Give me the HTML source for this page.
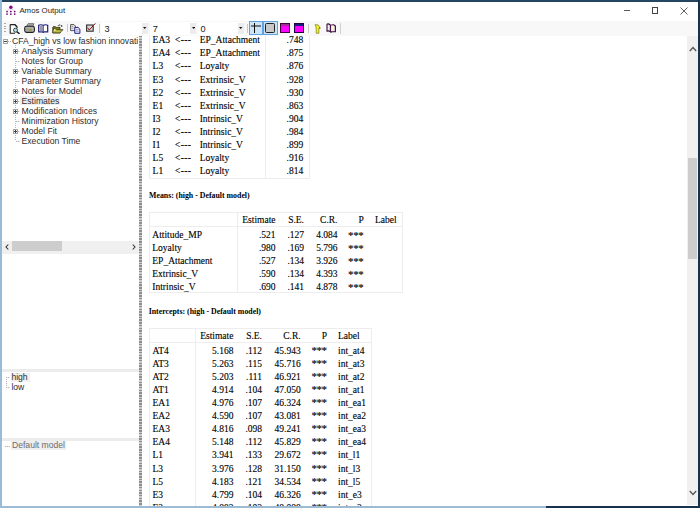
<!DOCTYPE html>
<html><head><meta charset="utf-8"><style>
html,body{margin:0;padding:0;width:700px;height:508px;overflow:hidden;background:#fff}
.r{position:absolute}
.t{position:absolute;white-space:nowrap;}
.s{-webkit-text-stroke:0.12px currentColor}
#left{position:absolute;left:0;top:0;width:139px;height:508px;overflow:hidden}
</style></head><body>
<div class="r" style="left:0px;top:0px;width:700px;height:508px;background:#fff"></div>
<div class="r" style="left:149px;top:30px;width:161px;height:149px;border:1px solid #ededed;border-top:none;box-sizing:border-box"></div>
<div class="r" style="left:265px;top:30px;width:1px;height:148px;background:#ededed"></div>
<div class="t s" style="left:152.60px;top:34.83px;height:10.52px;line-height:10.52px;font-family:'Liberation Serif', serif;font-size:9.5px;color:#000;">EA3</div>
<div class="t s" style="left:175.00px;top:34.83px;height:10.52px;line-height:10.52px;font-family:'Liberation Serif', serif;font-size:9.5px;color:#000;letter-spacing:0.35px">&lt;---</div>
<div class="t s" style="left:199.70px;top:34.83px;height:10.52px;line-height:10.52px;font-family:'Liberation Serif', serif;font-size:9.5px;color:#000;">EP_Attachment</div>
<div class="t s" style="left:3.20px;width:300px;text-align:right;top:34.83px;height:10.52px;line-height:10.52px;font-family:'Liberation Serif', serif;font-size:9.5px;color:#000;">.748</div>
<div class="t s" style="left:152.60px;top:47.83px;height:10.52px;line-height:10.52px;font-family:'Liberation Serif', serif;font-size:9.5px;color:#000;">EA4</div>
<div class="t s" style="left:175.00px;top:47.83px;height:10.52px;line-height:10.52px;font-family:'Liberation Serif', serif;font-size:9.5px;color:#000;letter-spacing:0.35px">&lt;---</div>
<div class="t s" style="left:199.70px;top:47.83px;height:10.52px;line-height:10.52px;font-family:'Liberation Serif', serif;font-size:9.5px;color:#000;">EP_Attachment</div>
<div class="t s" style="left:3.20px;width:300px;text-align:right;top:47.83px;height:10.52px;line-height:10.52px;font-family:'Liberation Serif', serif;font-size:9.5px;color:#000;">.875</div>
<div class="t s" style="left:152.60px;top:60.83px;height:10.52px;line-height:10.52px;font-family:'Liberation Serif', serif;font-size:9.5px;color:#000;">L3</div>
<div class="t s" style="left:175.00px;top:60.83px;height:10.52px;line-height:10.52px;font-family:'Liberation Serif', serif;font-size:9.5px;color:#000;letter-spacing:0.35px">&lt;---</div>
<div class="t s" style="left:199.70px;top:60.83px;height:10.52px;line-height:10.52px;font-family:'Liberation Serif', serif;font-size:9.5px;color:#000;">Loyalty</div>
<div class="t s" style="left:3.20px;width:300px;text-align:right;top:60.83px;height:10.52px;line-height:10.52px;font-family:'Liberation Serif', serif;font-size:9.5px;color:#000;">.876</div>
<div class="t s" style="left:152.60px;top:74.83px;height:10.52px;line-height:10.52px;font-family:'Liberation Serif', serif;font-size:9.5px;color:#000;">E3</div>
<div class="t s" style="left:175.00px;top:74.83px;height:10.52px;line-height:10.52px;font-family:'Liberation Serif', serif;font-size:9.5px;color:#000;letter-spacing:0.35px">&lt;---</div>
<div class="t s" style="left:199.70px;top:74.83px;height:10.52px;line-height:10.52px;font-family:'Liberation Serif', serif;font-size:9.5px;color:#000;">Extrinsic_V</div>
<div class="t s" style="left:3.20px;width:300px;text-align:right;top:74.83px;height:10.52px;line-height:10.52px;font-family:'Liberation Serif', serif;font-size:9.5px;color:#000;">.928</div>
<div class="t s" style="left:152.60px;top:87.83px;height:10.52px;line-height:10.52px;font-family:'Liberation Serif', serif;font-size:9.5px;color:#000;">E2</div>
<div class="t s" style="left:175.00px;top:87.83px;height:10.52px;line-height:10.52px;font-family:'Liberation Serif', serif;font-size:9.5px;color:#000;letter-spacing:0.35px">&lt;---</div>
<div class="t s" style="left:199.70px;top:87.83px;height:10.52px;line-height:10.52px;font-family:'Liberation Serif', serif;font-size:9.5px;color:#000;">Extrinsic_V</div>
<div class="t s" style="left:3.20px;width:300px;text-align:right;top:87.83px;height:10.52px;line-height:10.52px;font-family:'Liberation Serif', serif;font-size:9.5px;color:#000;">.930</div>
<div class="t s" style="left:152.60px;top:100.83px;height:10.52px;line-height:10.52px;font-family:'Liberation Serif', serif;font-size:9.5px;color:#000;">E1</div>
<div class="t s" style="left:175.00px;top:100.83px;height:10.52px;line-height:10.52px;font-family:'Liberation Serif', serif;font-size:9.5px;color:#000;letter-spacing:0.35px">&lt;---</div>
<div class="t s" style="left:199.70px;top:100.83px;height:10.52px;line-height:10.52px;font-family:'Liberation Serif', serif;font-size:9.5px;color:#000;">Extrinsic_V</div>
<div class="t s" style="left:3.20px;width:300px;text-align:right;top:100.83px;height:10.52px;line-height:10.52px;font-family:'Liberation Serif', serif;font-size:9.5px;color:#000;">.863</div>
<div class="t s" style="left:152.60px;top:113.83px;height:10.52px;line-height:10.52px;font-family:'Liberation Serif', serif;font-size:9.5px;color:#000;">I3</div>
<div class="t s" style="left:175.00px;top:113.83px;height:10.52px;line-height:10.52px;font-family:'Liberation Serif', serif;font-size:9.5px;color:#000;letter-spacing:0.35px">&lt;---</div>
<div class="t s" style="left:199.70px;top:113.83px;height:10.52px;line-height:10.52px;font-family:'Liberation Serif', serif;font-size:9.5px;color:#000;">Intrinsic_V</div>
<div class="t s" style="left:3.20px;width:300px;text-align:right;top:113.83px;height:10.52px;line-height:10.52px;font-family:'Liberation Serif', serif;font-size:9.5px;color:#000;">.904</div>
<div class="t s" style="left:152.60px;top:126.83px;height:10.52px;line-height:10.52px;font-family:'Liberation Serif', serif;font-size:9.5px;color:#000;">I2</div>
<div class="t s" style="left:175.00px;top:126.83px;height:10.52px;line-height:10.52px;font-family:'Liberation Serif', serif;font-size:9.5px;color:#000;letter-spacing:0.35px">&lt;---</div>
<div class="t s" style="left:199.70px;top:126.83px;height:10.52px;line-height:10.52px;font-family:'Liberation Serif', serif;font-size:9.5px;color:#000;">Intrinsic_V</div>
<div class="t s" style="left:3.20px;width:300px;text-align:right;top:126.83px;height:10.52px;line-height:10.52px;font-family:'Liberation Serif', serif;font-size:9.5px;color:#000;">.984</div>
<div class="t s" style="left:152.60px;top:139.83px;height:10.52px;line-height:10.52px;font-family:'Liberation Serif', serif;font-size:9.5px;color:#000;">I1</div>
<div class="t s" style="left:175.00px;top:139.83px;height:10.52px;line-height:10.52px;font-family:'Liberation Serif', serif;font-size:9.5px;color:#000;letter-spacing:0.35px">&lt;---</div>
<div class="t s" style="left:199.70px;top:139.83px;height:10.52px;line-height:10.52px;font-family:'Liberation Serif', serif;font-size:9.5px;color:#000;">Intrinsic_V</div>
<div class="t s" style="left:3.20px;width:300px;text-align:right;top:139.83px;height:10.52px;line-height:10.52px;font-family:'Liberation Serif', serif;font-size:9.5px;color:#000;">.899</div>
<div class="t s" style="left:152.60px;top:152.83px;height:10.52px;line-height:10.52px;font-family:'Liberation Serif', serif;font-size:9.5px;color:#000;">L5</div>
<div class="t s" style="left:175.00px;top:152.83px;height:10.52px;line-height:10.52px;font-family:'Liberation Serif', serif;font-size:9.5px;color:#000;letter-spacing:0.35px">&lt;---</div>
<div class="t s" style="left:199.70px;top:152.83px;height:10.52px;line-height:10.52px;font-family:'Liberation Serif', serif;font-size:9.5px;color:#000;">Loyalty</div>
<div class="t s" style="left:3.20px;width:300px;text-align:right;top:152.83px;height:10.52px;line-height:10.52px;font-family:'Liberation Serif', serif;font-size:9.5px;color:#000;">.916</div>
<div class="t s" style="left:152.60px;top:165.83px;height:10.52px;line-height:10.52px;font-family:'Liberation Serif', serif;font-size:9.5px;color:#000;">L1</div>
<div class="t s" style="left:175.00px;top:165.83px;height:10.52px;line-height:10.52px;font-family:'Liberation Serif', serif;font-size:9.5px;color:#000;letter-spacing:0.35px">&lt;---</div>
<div class="t s" style="left:199.70px;top:165.83px;height:10.52px;line-height:10.52px;font-family:'Liberation Serif', serif;font-size:9.5px;color:#000;">Loyalty</div>
<div class="t s" style="left:3.20px;width:300px;text-align:right;top:165.83px;height:10.52px;line-height:10.52px;font-family:'Liberation Serif', serif;font-size:9.5px;color:#000;">.814</div>
<div class="t" style="left:149.00px;top:192.00px;height:8.69px;line-height:8.69px;font-family:'Liberation Serif', serif;font-size:7.85px;color:#000;font-weight:bold;">Means: (high - Default model)</div>
<div class="r" style="left:149px;top:212.4px;width:254px;height:80.5px;border:1px solid #ededed;box-sizing:border-box"></div>
<div class="r" style="left:149px;top:225.6px;width:253px;height:1.4px;background:#ededed"></div>
<div class="r" style="left:236.8px;top:212.4px;width:1.2px;height:80px;background:#ededed"></div>
<div class="t s" style="left:-24.50px;width:300px;text-align:right;top:214.93px;height:10.52px;line-height:10.52px;font-family:'Liberation Serif', serif;font-size:9.5px;color:#000;">Estimate</div>
<div class="t s" style="left:4.00px;width:300px;text-align:right;top:214.93px;height:10.52px;line-height:10.52px;font-family:'Liberation Serif', serif;font-size:9.5px;color:#000;">S.E.</div>
<div class="t s" style="left:37.50px;width:300px;text-align:right;top:214.93px;height:10.52px;line-height:10.52px;font-family:'Liberation Serif', serif;font-size:9.5px;color:#000;">C.R.</div>
<div class="t s" style="left:63.70px;width:300px;text-align:right;top:214.93px;height:10.52px;line-height:10.52px;font-family:'Liberation Serif', serif;font-size:9.5px;color:#000;">P</div>
<div class="t s" style="left:375.00px;top:214.93px;height:10.52px;line-height:10.52px;font-family:'Liberation Serif', serif;font-size:9.5px;color:#000;">Label</div>
<div class="t s" style="left:152.30px;top:230.23px;height:10.52px;line-height:10.52px;font-family:'Liberation Serif', serif;font-size:9.5px;color:#000;">Attitude_MP</div>
<div class="t s" style="left:-24.50px;width:300px;text-align:right;top:230.23px;height:10.52px;line-height:10.52px;font-family:'Liberation Serif', serif;font-size:9.5px;color:#000;">.521</div>
<div class="t s" style="left:4.00px;width:300px;text-align:right;top:230.23px;height:10.52px;line-height:10.52px;font-family:'Liberation Serif', serif;font-size:9.5px;color:#000;">.127</div>
<div class="t s" style="left:37.50px;width:300px;text-align:right;top:230.23px;height:10.52px;line-height:10.52px;font-family:'Liberation Serif', serif;font-size:9.5px;color:#000;">4.084</div>
<div class="t s" style="left:63.70px;width:300px;text-align:right;top:228.70px;height:12.18px;line-height:12.18px;font-family:'Liberation Serif', serif;font-size:11px;color:#000;letter-spacing:-0.45px;margin-left:-0.45px">***</div>
<div class="t s" style="left:152.30px;top:243.23px;height:10.52px;line-height:10.52px;font-family:'Liberation Serif', serif;font-size:9.5px;color:#000;">Loyalty</div>
<div class="t s" style="left:-24.50px;width:300px;text-align:right;top:243.23px;height:10.52px;line-height:10.52px;font-family:'Liberation Serif', serif;font-size:9.5px;color:#000;">.980</div>
<div class="t s" style="left:4.00px;width:300px;text-align:right;top:243.23px;height:10.52px;line-height:10.52px;font-family:'Liberation Serif', serif;font-size:9.5px;color:#000;">.169</div>
<div class="t s" style="left:37.50px;width:300px;text-align:right;top:243.23px;height:10.52px;line-height:10.52px;font-family:'Liberation Serif', serif;font-size:9.5px;color:#000;">5.796</div>
<div class="t s" style="left:63.70px;width:300px;text-align:right;top:241.70px;height:12.18px;line-height:12.18px;font-family:'Liberation Serif', serif;font-size:11px;color:#000;letter-spacing:-0.45px;margin-left:-0.45px">***</div>
<div class="t s" style="left:152.30px;top:256.23px;height:10.52px;line-height:10.52px;font-family:'Liberation Serif', serif;font-size:9.5px;color:#000;">EP_Attachment</div>
<div class="t s" style="left:-24.50px;width:300px;text-align:right;top:256.23px;height:10.52px;line-height:10.52px;font-family:'Liberation Serif', serif;font-size:9.5px;color:#000;">.527</div>
<div class="t s" style="left:4.00px;width:300px;text-align:right;top:256.23px;height:10.52px;line-height:10.52px;font-family:'Liberation Serif', serif;font-size:9.5px;color:#000;">.134</div>
<div class="t s" style="left:37.50px;width:300px;text-align:right;top:256.23px;height:10.52px;line-height:10.52px;font-family:'Liberation Serif', serif;font-size:9.5px;color:#000;">3.926</div>
<div class="t s" style="left:63.70px;width:300px;text-align:right;top:254.70px;height:12.18px;line-height:12.18px;font-family:'Liberation Serif', serif;font-size:11px;color:#000;letter-spacing:-0.45px;margin-left:-0.45px">***</div>
<div class="t s" style="left:152.30px;top:269.23px;height:10.52px;line-height:10.52px;font-family:'Liberation Serif', serif;font-size:9.5px;color:#000;">Extrinsic_V</div>
<div class="t s" style="left:-24.50px;width:300px;text-align:right;top:269.23px;height:10.52px;line-height:10.52px;font-family:'Liberation Serif', serif;font-size:9.5px;color:#000;">.590</div>
<div class="t s" style="left:4.00px;width:300px;text-align:right;top:269.23px;height:10.52px;line-height:10.52px;font-family:'Liberation Serif', serif;font-size:9.5px;color:#000;">.134</div>
<div class="t s" style="left:37.50px;width:300px;text-align:right;top:269.23px;height:10.52px;line-height:10.52px;font-family:'Liberation Serif', serif;font-size:9.5px;color:#000;">4.393</div>
<div class="t s" style="left:63.70px;width:300px;text-align:right;top:267.70px;height:12.18px;line-height:12.18px;font-family:'Liberation Serif', serif;font-size:11px;color:#000;letter-spacing:-0.45px;margin-left:-0.45px">***</div>
<div class="t s" style="left:152.30px;top:282.23px;height:10.52px;line-height:10.52px;font-family:'Liberation Serif', serif;font-size:9.5px;color:#000;">Intrinsic_V</div>
<div class="t s" style="left:-24.50px;width:300px;text-align:right;top:282.23px;height:10.52px;line-height:10.52px;font-family:'Liberation Serif', serif;font-size:9.5px;color:#000;">.690</div>
<div class="t s" style="left:4.00px;width:300px;text-align:right;top:282.23px;height:10.52px;line-height:10.52px;font-family:'Liberation Serif', serif;font-size:9.5px;color:#000;">.141</div>
<div class="t s" style="left:37.50px;width:300px;text-align:right;top:282.23px;height:10.52px;line-height:10.52px;font-family:'Liberation Serif', serif;font-size:9.5px;color:#000;">4.878</div>
<div class="t s" style="left:63.70px;width:300px;text-align:right;top:280.70px;height:12.18px;line-height:12.18px;font-family:'Liberation Serif', serif;font-size:11px;color:#000;letter-spacing:-0.45px;margin-left:-0.45px">***</div>
<div class="t" style="left:148.70px;top:308.20px;height:8.69px;line-height:8.69px;font-family:'Liberation Serif', serif;font-size:7.85px;color:#000;font-weight:bold;">Intercepts: (high - Default model)</div>
<div class="r" style="left:149px;top:328.4px;width:222.5px;height:200px;border:1px solid #ededed;border-bottom:none;box-sizing:border-box"></div>
<div class="r" style="left:149px;top:341.8px;width:222.5px;height:1.5px;background:#ededed"></div>
<div class="r" style="left:194.8px;top:328.4px;width:1.2px;height:200px;background:#ededed"></div>
<div class="t s" style="left:-66.60px;width:300px;text-align:right;top:331.33px;height:10.52px;line-height:10.52px;font-family:'Liberation Serif', serif;font-size:9.5px;color:#000;">Estimate</div>
<div class="t s" style="left:-38.00px;width:300px;text-align:right;top:331.33px;height:10.52px;line-height:10.52px;font-family:'Liberation Serif', serif;font-size:9.5px;color:#000;">S.E.</div>
<div class="t s" style="left:0.70px;width:300px;text-align:right;top:331.33px;height:10.52px;line-height:10.52px;font-family:'Liberation Serif', serif;font-size:9.5px;color:#000;">C.R.</div>
<div class="t s" style="left:27.00px;width:300px;text-align:right;top:331.33px;height:10.52px;line-height:10.52px;font-family:'Liberation Serif', serif;font-size:9.5px;color:#000;">P</div>
<div class="t s" style="left:338.00px;top:331.33px;height:10.52px;line-height:10.52px;font-family:'Liberation Serif', serif;font-size:9.5px;color:#000;">Label</div>
<div class="t s" style="left:152.50px;top:345.83px;height:10.52px;line-height:10.52px;font-family:'Liberation Serif', serif;font-size:9.5px;color:#000;">AT4</div>
<div class="t s" style="left:-66.60px;width:300px;text-align:right;top:345.83px;height:10.52px;line-height:10.52px;font-family:'Liberation Serif', serif;font-size:9.5px;color:#000;">5.168</div>
<div class="t s" style="left:-38.00px;width:300px;text-align:right;top:345.83px;height:10.52px;line-height:10.52px;font-family:'Liberation Serif', serif;font-size:9.5px;color:#000;">.112</div>
<div class="t s" style="left:0.70px;width:300px;text-align:right;top:345.83px;height:10.52px;line-height:10.52px;font-family:'Liberation Serif', serif;font-size:9.5px;color:#000;">45.943</div>
<div class="t s" style="left:27.00px;width:300px;text-align:right;top:344.30px;height:12.18px;line-height:12.18px;font-family:'Liberation Serif', serif;font-size:11px;color:#000;letter-spacing:-0.45px;margin-left:-0.45px">***</div>
<div class="t s" style="left:338.00px;top:345.83px;height:10.52px;line-height:10.52px;font-family:'Liberation Serif', serif;font-size:9.5px;color:#000;">int_at4</div>
<div class="t s" style="left:152.50px;top:358.83px;height:10.52px;line-height:10.52px;font-family:'Liberation Serif', serif;font-size:9.5px;color:#000;">AT3</div>
<div class="t s" style="left:-66.60px;width:300px;text-align:right;top:358.83px;height:10.52px;line-height:10.52px;font-family:'Liberation Serif', serif;font-size:9.5px;color:#000;">5.263</div>
<div class="t s" style="left:-38.00px;width:300px;text-align:right;top:358.83px;height:10.52px;line-height:10.52px;font-family:'Liberation Serif', serif;font-size:9.5px;color:#000;">.115</div>
<div class="t s" style="left:0.70px;width:300px;text-align:right;top:358.83px;height:10.52px;line-height:10.52px;font-family:'Liberation Serif', serif;font-size:9.5px;color:#000;">45.716</div>
<div class="t s" style="left:27.00px;width:300px;text-align:right;top:357.30px;height:12.18px;line-height:12.18px;font-family:'Liberation Serif', serif;font-size:11px;color:#000;letter-spacing:-0.45px;margin-left:-0.45px">***</div>
<div class="t s" style="left:338.00px;top:358.83px;height:10.52px;line-height:10.52px;font-family:'Liberation Serif', serif;font-size:9.5px;color:#000;">int_at3</div>
<div class="t s" style="left:152.50px;top:371.83px;height:10.52px;line-height:10.52px;font-family:'Liberation Serif', serif;font-size:9.5px;color:#000;">AT2</div>
<div class="t s" style="left:-66.60px;width:300px;text-align:right;top:371.83px;height:10.52px;line-height:10.52px;font-family:'Liberation Serif', serif;font-size:9.5px;color:#000;">5.203</div>
<div class="t s" style="left:-38.00px;width:300px;text-align:right;top:371.83px;height:10.52px;line-height:10.52px;font-family:'Liberation Serif', serif;font-size:9.5px;color:#000;">.111</div>
<div class="t s" style="left:0.70px;width:300px;text-align:right;top:371.83px;height:10.52px;line-height:10.52px;font-family:'Liberation Serif', serif;font-size:9.5px;color:#000;">46.921</div>
<div class="t s" style="left:27.00px;width:300px;text-align:right;top:370.30px;height:12.18px;line-height:12.18px;font-family:'Liberation Serif', serif;font-size:11px;color:#000;letter-spacing:-0.45px;margin-left:-0.45px">***</div>
<div class="t s" style="left:338.00px;top:371.83px;height:10.52px;line-height:10.52px;font-family:'Liberation Serif', serif;font-size:9.5px;color:#000;">int_at2</div>
<div class="t s" style="left:152.50px;top:384.83px;height:10.52px;line-height:10.52px;font-family:'Liberation Serif', serif;font-size:9.5px;color:#000;">AT1</div>
<div class="t s" style="left:-66.60px;width:300px;text-align:right;top:384.83px;height:10.52px;line-height:10.52px;font-family:'Liberation Serif', serif;font-size:9.5px;color:#000;">4.914</div>
<div class="t s" style="left:-38.00px;width:300px;text-align:right;top:384.83px;height:10.52px;line-height:10.52px;font-family:'Liberation Serif', serif;font-size:9.5px;color:#000;">.104</div>
<div class="t s" style="left:0.70px;width:300px;text-align:right;top:384.83px;height:10.52px;line-height:10.52px;font-family:'Liberation Serif', serif;font-size:9.5px;color:#000;">47.050</div>
<div class="t s" style="left:27.00px;width:300px;text-align:right;top:383.30px;height:12.18px;line-height:12.18px;font-family:'Liberation Serif', serif;font-size:11px;color:#000;letter-spacing:-0.45px;margin-left:-0.45px">***</div>
<div class="t s" style="left:338.00px;top:384.83px;height:10.52px;line-height:10.52px;font-family:'Liberation Serif', serif;font-size:9.5px;color:#000;">int_at1</div>
<div class="t s" style="left:152.50px;top:397.83px;height:10.52px;line-height:10.52px;font-family:'Liberation Serif', serif;font-size:9.5px;color:#000;">EA1</div>
<div class="t s" style="left:-66.60px;width:300px;text-align:right;top:397.83px;height:10.52px;line-height:10.52px;font-family:'Liberation Serif', serif;font-size:9.5px;color:#000;">4.976</div>
<div class="t s" style="left:-38.00px;width:300px;text-align:right;top:397.83px;height:10.52px;line-height:10.52px;font-family:'Liberation Serif', serif;font-size:9.5px;color:#000;">.107</div>
<div class="t s" style="left:0.70px;width:300px;text-align:right;top:397.83px;height:10.52px;line-height:10.52px;font-family:'Liberation Serif', serif;font-size:9.5px;color:#000;">46.324</div>
<div class="t s" style="left:27.00px;width:300px;text-align:right;top:396.30px;height:12.18px;line-height:12.18px;font-family:'Liberation Serif', serif;font-size:11px;color:#000;letter-spacing:-0.45px;margin-left:-0.45px">***</div>
<div class="t s" style="left:338.00px;top:397.83px;height:10.52px;line-height:10.52px;font-family:'Liberation Serif', serif;font-size:9.5px;color:#000;">int_ea1</div>
<div class="t s" style="left:152.50px;top:410.83px;height:10.52px;line-height:10.52px;font-family:'Liberation Serif', serif;font-size:9.5px;color:#000;">EA2</div>
<div class="t s" style="left:-66.60px;width:300px;text-align:right;top:410.83px;height:10.52px;line-height:10.52px;font-family:'Liberation Serif', serif;font-size:9.5px;color:#000;">4.590</div>
<div class="t s" style="left:-38.00px;width:300px;text-align:right;top:410.83px;height:10.52px;line-height:10.52px;font-family:'Liberation Serif', serif;font-size:9.5px;color:#000;">.107</div>
<div class="t s" style="left:0.70px;width:300px;text-align:right;top:410.83px;height:10.52px;line-height:10.52px;font-family:'Liberation Serif', serif;font-size:9.5px;color:#000;">43.081</div>
<div class="t s" style="left:27.00px;width:300px;text-align:right;top:409.30px;height:12.18px;line-height:12.18px;font-family:'Liberation Serif', serif;font-size:11px;color:#000;letter-spacing:-0.45px;margin-left:-0.45px">***</div>
<div class="t s" style="left:338.00px;top:410.83px;height:10.52px;line-height:10.52px;font-family:'Liberation Serif', serif;font-size:9.5px;color:#000;">int_ea2</div>
<div class="t s" style="left:152.50px;top:423.83px;height:10.52px;line-height:10.52px;font-family:'Liberation Serif', serif;font-size:9.5px;color:#000;">EA3</div>
<div class="t s" style="left:-66.60px;width:300px;text-align:right;top:423.83px;height:10.52px;line-height:10.52px;font-family:'Liberation Serif', serif;font-size:9.5px;color:#000;">4.816</div>
<div class="t s" style="left:-38.00px;width:300px;text-align:right;top:423.83px;height:10.52px;line-height:10.52px;font-family:'Liberation Serif', serif;font-size:9.5px;color:#000;">.098</div>
<div class="t s" style="left:0.70px;width:300px;text-align:right;top:423.83px;height:10.52px;line-height:10.52px;font-family:'Liberation Serif', serif;font-size:9.5px;color:#000;">49.241</div>
<div class="t s" style="left:27.00px;width:300px;text-align:right;top:422.30px;height:12.18px;line-height:12.18px;font-family:'Liberation Serif', serif;font-size:11px;color:#000;letter-spacing:-0.45px;margin-left:-0.45px">***</div>
<div class="t s" style="left:338.00px;top:423.83px;height:10.52px;line-height:10.52px;font-family:'Liberation Serif', serif;font-size:9.5px;color:#000;">int_ea3</div>
<div class="t s" style="left:152.50px;top:436.83px;height:10.52px;line-height:10.52px;font-family:'Liberation Serif', serif;font-size:9.5px;color:#000;">EA4</div>
<div class="t s" style="left:-66.60px;width:300px;text-align:right;top:436.83px;height:10.52px;line-height:10.52px;font-family:'Liberation Serif', serif;font-size:9.5px;color:#000;">5.148</div>
<div class="t s" style="left:-38.00px;width:300px;text-align:right;top:436.83px;height:10.52px;line-height:10.52px;font-family:'Liberation Serif', serif;font-size:9.5px;color:#000;">.112</div>
<div class="t s" style="left:0.70px;width:300px;text-align:right;top:436.83px;height:10.52px;line-height:10.52px;font-family:'Liberation Serif', serif;font-size:9.5px;color:#000;">45.829</div>
<div class="t s" style="left:27.00px;width:300px;text-align:right;top:435.30px;height:12.18px;line-height:12.18px;font-family:'Liberation Serif', serif;font-size:11px;color:#000;letter-spacing:-0.45px;margin-left:-0.45px">***</div>
<div class="t s" style="left:338.00px;top:436.83px;height:10.52px;line-height:10.52px;font-family:'Liberation Serif', serif;font-size:9.5px;color:#000;">int_ea4</div>
<div class="t s" style="left:152.50px;top:449.83px;height:10.52px;line-height:10.52px;font-family:'Liberation Serif', serif;font-size:9.5px;color:#000;">L1</div>
<div class="t s" style="left:-66.60px;width:300px;text-align:right;top:449.83px;height:10.52px;line-height:10.52px;font-family:'Liberation Serif', serif;font-size:9.5px;color:#000;">3.941</div>
<div class="t s" style="left:-38.00px;width:300px;text-align:right;top:449.83px;height:10.52px;line-height:10.52px;font-family:'Liberation Serif', serif;font-size:9.5px;color:#000;">.133</div>
<div class="t s" style="left:0.70px;width:300px;text-align:right;top:449.83px;height:10.52px;line-height:10.52px;font-family:'Liberation Serif', serif;font-size:9.5px;color:#000;">29.672</div>
<div class="t s" style="left:27.00px;width:300px;text-align:right;top:448.30px;height:12.18px;line-height:12.18px;font-family:'Liberation Serif', serif;font-size:11px;color:#000;letter-spacing:-0.45px;margin-left:-0.45px">***</div>
<div class="t s" style="left:338.00px;top:449.83px;height:10.52px;line-height:10.52px;font-family:'Liberation Serif', serif;font-size:9.5px;color:#000;">int_l1</div>
<div class="t s" style="left:152.50px;top:463.83px;height:10.52px;line-height:10.52px;font-family:'Liberation Serif', serif;font-size:9.5px;color:#000;">L3</div>
<div class="t s" style="left:-66.60px;width:300px;text-align:right;top:463.83px;height:10.52px;line-height:10.52px;font-family:'Liberation Serif', serif;font-size:9.5px;color:#000;">3.976</div>
<div class="t s" style="left:-38.00px;width:300px;text-align:right;top:463.83px;height:10.52px;line-height:10.52px;font-family:'Liberation Serif', serif;font-size:9.5px;color:#000;">.128</div>
<div class="t s" style="left:0.70px;width:300px;text-align:right;top:463.83px;height:10.52px;line-height:10.52px;font-family:'Liberation Serif', serif;font-size:9.5px;color:#000;">31.150</div>
<div class="t s" style="left:27.00px;width:300px;text-align:right;top:462.30px;height:12.18px;line-height:12.18px;font-family:'Liberation Serif', serif;font-size:11px;color:#000;letter-spacing:-0.45px;margin-left:-0.45px">***</div>
<div class="t s" style="left:338.00px;top:463.83px;height:10.52px;line-height:10.52px;font-family:'Liberation Serif', serif;font-size:9.5px;color:#000;">int_l3</div>
<div class="t s" style="left:152.50px;top:476.83px;height:10.52px;line-height:10.52px;font-family:'Liberation Serif', serif;font-size:9.5px;color:#000;">L5</div>
<div class="t s" style="left:-66.60px;width:300px;text-align:right;top:476.83px;height:10.52px;line-height:10.52px;font-family:'Liberation Serif', serif;font-size:9.5px;color:#000;">4.183</div>
<div class="t s" style="left:-38.00px;width:300px;text-align:right;top:476.83px;height:10.52px;line-height:10.52px;font-family:'Liberation Serif', serif;font-size:9.5px;color:#000;">.121</div>
<div class="t s" style="left:0.70px;width:300px;text-align:right;top:476.83px;height:10.52px;line-height:10.52px;font-family:'Liberation Serif', serif;font-size:9.5px;color:#000;">34.534</div>
<div class="t s" style="left:27.00px;width:300px;text-align:right;top:475.30px;height:12.18px;line-height:12.18px;font-family:'Liberation Serif', serif;font-size:11px;color:#000;letter-spacing:-0.45px;margin-left:-0.45px">***</div>
<div class="t s" style="left:338.00px;top:476.83px;height:10.52px;line-height:10.52px;font-family:'Liberation Serif', serif;font-size:9.5px;color:#000;">int_l5</div>
<div class="t s" style="left:152.50px;top:489.83px;height:10.52px;line-height:10.52px;font-family:'Liberation Serif', serif;font-size:9.5px;color:#000;">E3</div>
<div class="t s" style="left:-66.60px;width:300px;text-align:right;top:489.83px;height:10.52px;line-height:10.52px;font-family:'Liberation Serif', serif;font-size:9.5px;color:#000;">4.799</div>
<div class="t s" style="left:-38.00px;width:300px;text-align:right;top:489.83px;height:10.52px;line-height:10.52px;font-family:'Liberation Serif', serif;font-size:9.5px;color:#000;">.104</div>
<div class="t s" style="left:0.70px;width:300px;text-align:right;top:489.83px;height:10.52px;line-height:10.52px;font-family:'Liberation Serif', serif;font-size:9.5px;color:#000;">46.326</div>
<div class="t s" style="left:27.00px;width:300px;text-align:right;top:488.30px;height:12.18px;line-height:12.18px;font-family:'Liberation Serif', serif;font-size:11px;color:#000;letter-spacing:-0.45px;margin-left:-0.45px">***</div>
<div class="t s" style="left:338.00px;top:489.83px;height:10.52px;line-height:10.52px;font-family:'Liberation Serif', serif;font-size:9.5px;color:#000;">int_e3</div>
<div class="t s" style="left:152.50px;top:502.83px;height:10.52px;line-height:10.52px;font-family:'Liberation Serif', serif;font-size:9.5px;color:#000;">E2</div>
<div class="t s" style="left:-66.60px;width:300px;text-align:right;top:502.83px;height:10.52px;line-height:10.52px;font-family:'Liberation Serif', serif;font-size:9.5px;color:#000;">4.883</div>
<div class="t s" style="left:-38.00px;width:300px;text-align:right;top:502.83px;height:10.52px;line-height:10.52px;font-family:'Liberation Serif', serif;font-size:9.5px;color:#000;">.103</div>
<div class="t s" style="left:0.70px;width:300px;text-align:right;top:502.83px;height:10.52px;line-height:10.52px;font-family:'Liberation Serif', serif;font-size:9.5px;color:#000;">48.088</div>
<div class="t s" style="left:27.00px;width:300px;text-align:right;top:501.30px;height:12.18px;line-height:12.18px;font-family:'Liberation Serif', serif;font-size:11px;color:#000;letter-spacing:-0.45px;margin-left:-0.45px">***</div>
<div class="t s" style="left:338.00px;top:502.83px;height:10.52px;line-height:10.52px;font-family:'Liberation Serif', serif;font-size:9.5px;color:#000;">int_e2</div>
<div class="r" style="left:3px;top:39px;width:5px;height:5px;border:1px solid #a4a4a4;background:#fff;box-sizing:border-box"></div>
<div class="r" style="left:4px;top:41px;width:3px;height:1px;background:#444"></div>
<div class="r" style="left:8px;top:41px;width:3px;height:1px;background:repeating-linear-gradient(to right,#b4b4b4 0 1px,#e4e4e4 1px 2px)"></div>
<div class="t" style="left:12.10px;top:37.11px;height:9.61px;line-height:9.61px;font-family:'Liberation Sans', sans-serif;font-size:8.6px;color:#2c2c2c;width:126.4px;overflow:hidden">CFA_high vs low fashion innovativeness</div>
<div class="r" style="left:15px;top:45px;width:1px;height:96px;background:repeating-linear-gradient(to bottom,#b4b4b4 0 1px,transparent 1px 2px)"></div>
<div class="r" style="left:13px;top:48.7px;width:5px;height:5px;border:1px solid #a4a4a4;background:#fff;box-sizing:border-box"></div>
<div class="r" style="left:14px;top:50.7px;width:3px;height:1px;background:#444"></div>
<div class="r" style="left:15px;top:49.7px;width:1px;height:3px;background:#444"></div>
<div class="r" style="left:18px;top:51.2px;width:2px;height:1px;background:repeating-linear-gradient(to right,#b4b4b4 0 1px,#e4e4e4 1px 2px)"></div>
<div class="t" style="left:21.60px;top:47.41px;height:9.61px;line-height:9.61px;font-family:'Liberation Sans', sans-serif;font-size:8.6px;color:#2c2c2c;">Analysis Summary</div>
<div class="r" style="left:16px;top:61.2px;width:4px;height:1px;background:repeating-linear-gradient(to right,#b4b4b4 0 1px,#e4e4e4 1px 2px)"></div>
<div class="t" style="left:21.60px;top:57.41px;height:9.61px;line-height:9.61px;font-family:'Liberation Sans', sans-serif;font-size:8.6px;color:#2c2c2c;">Notes for Group</div>
<div class="r" style="left:13px;top:68.7px;width:5px;height:5px;border:1px solid #a4a4a4;background:#fff;box-sizing:border-box"></div>
<div class="r" style="left:14px;top:70.7px;width:3px;height:1px;background:#444"></div>
<div class="r" style="left:15px;top:69.7px;width:1px;height:3px;background:#444"></div>
<div class="r" style="left:18px;top:71.2px;width:2px;height:1px;background:repeating-linear-gradient(to right,#b4b4b4 0 1px,#e4e4e4 1px 2px)"></div>
<div class="t" style="left:21.60px;top:67.41px;height:9.61px;line-height:9.61px;font-family:'Liberation Sans', sans-serif;font-size:8.6px;color:#2c2c2c;">Variable Summary</div>
<div class="r" style="left:16px;top:81.2px;width:4px;height:1px;background:repeating-linear-gradient(to right,#b4b4b4 0 1px,#e4e4e4 1px 2px)"></div>
<div class="t" style="left:21.60px;top:77.41px;height:9.61px;line-height:9.61px;font-family:'Liberation Sans', sans-serif;font-size:8.6px;color:#2c2c2c;">Parameter Summary</div>
<div class="r" style="left:13px;top:88.7px;width:5px;height:5px;border:1px solid #a4a4a4;background:#fff;box-sizing:border-box"></div>
<div class="r" style="left:14px;top:90.7px;width:3px;height:1px;background:#444"></div>
<div class="r" style="left:15px;top:89.7px;width:1px;height:3px;background:#444"></div>
<div class="r" style="left:18px;top:91.2px;width:2px;height:1px;background:repeating-linear-gradient(to right,#b4b4b4 0 1px,#e4e4e4 1px 2px)"></div>
<div class="t" style="left:21.60px;top:87.41px;height:9.61px;line-height:9.61px;font-family:'Liberation Sans', sans-serif;font-size:8.6px;color:#2c2c2c;">Notes for Model</div>
<div class="r" style="left:20px;top:96.4px;width:39.5px;height:9px;background:#efefef"></div>
<div class="r" style="left:13px;top:98.7px;width:5px;height:5px;border:1px solid #a4a4a4;background:#fff;box-sizing:border-box"></div>
<div class="r" style="left:14px;top:100.7px;width:3px;height:1px;background:#444"></div>
<div class="r" style="left:15px;top:99.7px;width:1px;height:3px;background:#444"></div>
<div class="r" style="left:18px;top:101.2px;width:2px;height:1px;background:repeating-linear-gradient(to right,#b4b4b4 0 1px,#e4e4e4 1px 2px)"></div>
<div class="t" style="left:21.60px;top:97.41px;height:9.61px;line-height:9.61px;font-family:'Liberation Sans', sans-serif;font-size:8.6px;color:#2c2c2c;">Estimates</div>
<div class="r" style="left:13px;top:108.7px;width:5px;height:5px;border:1px solid #a4a4a4;background:#fff;box-sizing:border-box"></div>
<div class="r" style="left:14px;top:110.7px;width:3px;height:1px;background:#444"></div>
<div class="r" style="left:15px;top:109.7px;width:1px;height:3px;background:#444"></div>
<div class="r" style="left:18px;top:111.2px;width:2px;height:1px;background:repeating-linear-gradient(to right,#b4b4b4 0 1px,#e4e4e4 1px 2px)"></div>
<div class="t" style="left:21.60px;top:107.41px;height:9.61px;line-height:9.61px;font-family:'Liberation Sans', sans-serif;font-size:8.6px;color:#2c2c2c;">Modification Indices</div>
<div class="r" style="left:16px;top:121.2px;width:4px;height:1px;background:repeating-linear-gradient(to right,#b4b4b4 0 1px,#e4e4e4 1px 2px)"></div>
<div class="t" style="left:21.60px;top:117.41px;height:9.61px;line-height:9.61px;font-family:'Liberation Sans', sans-serif;font-size:8.6px;color:#2c2c2c;">Minimization History</div>
<div class="r" style="left:13px;top:128.7px;width:5px;height:5px;border:1px solid #a4a4a4;background:#fff;box-sizing:border-box"></div>
<div class="r" style="left:14px;top:130.7px;width:3px;height:1px;background:#444"></div>
<div class="r" style="left:15px;top:129.7px;width:1px;height:3px;background:#444"></div>
<div class="r" style="left:18px;top:131.2px;width:2px;height:1px;background:repeating-linear-gradient(to right,#b4b4b4 0 1px,#e4e4e4 1px 2px)"></div>
<div class="t" style="left:21.60px;top:127.41px;height:9.61px;line-height:9.61px;font-family:'Liberation Sans', sans-serif;font-size:8.6px;color:#2c2c2c;">Model Fit</div>
<div class="r" style="left:16px;top:141.2px;width:4px;height:1px;background:repeating-linear-gradient(to right,#b4b4b4 0 1px,#e4e4e4 1px 2px)"></div>
<div class="t" style="left:21.60px;top:137.41px;height:9.61px;line-height:9.61px;font-family:'Liberation Sans', sans-serif;font-size:8.6px;color:#2c2c2c;">Execution Time</div>
<div class="r" style="left:138.5px;top:36px;width:4px;height:470px;background:#fff"></div>
<div class="r" style="left:2px;top:241px;width:137px;height:12.5px;background:#f0f0f0"></div>
<div class="r" style="left:12px;top:241.4px;width:49.7px;height:9.3px;background:#cdcdcd"></div>
<svg class="r" style="left:4.5px;top:243.5px" width="4" height="6" viewBox="0 0 4 6"><path d="M3.3 0.5 L1 3 L3.3 5.5" stroke="#333" stroke-width="1.1" fill="none"/></svg>
<svg class="r" style="left:132px;top:243.5px" width="4" height="6" viewBox="0 0 4 6"><path d="M0.7 0.5 L3 3 L0.7 5.5" stroke="#333" stroke-width="1.1" fill="none"/></svg>
<div class="r" style="left:2px;top:369.3px;width:137px;height:2.5px;background:#ececec"></div>
<div class="r" style="left:10.7px;top:372.5px;width:19px;height:9px;background:#f0f0f0"></div>
<div class="r" style="left:5.7px;top:377px;width:1px;height:11px;background:repeating-linear-gradient(to bottom,#b4b4b4 0 1px,transparent 1px 2px)"></div>
<div class="r" style="left:5.7px;top:377px;width:4.3px;height:1px;background:repeating-linear-gradient(to right,#b4b4b4 0 1px,#e4e4e4 1px 2px)"></div>
<div class="r" style="left:5.7px;top:387.4px;width:4.3px;height:1px;background:repeating-linear-gradient(to right,#b4b4b4 0 1px,#e4e4e4 1px 2px)"></div>
<div class="t" style="left:11.40px;top:372.81px;height:9.61px;line-height:9.61px;font-family:'Liberation Sans', sans-serif;font-size:8.6px;color:#2c2c2c;">high</div>
<div class="t" style="left:11.40px;top:383.01px;height:9.61px;line-height:9.61px;font-family:'Liberation Sans', sans-serif;font-size:8.6px;color:#2c2c2c;">low</div>
<div class="r" style="left:2px;top:438px;width:137px;height:2.8px;background:#ececec"></div>
<div class="r" style="left:10.9px;top:441.1px;width:54.8px;height:9.2px;background:#efefef"></div>
<div class="r" style="left:5px;top:445.7px;width:5.300000000000001px;height:1px;background:repeating-linear-gradient(to right,#b4b4b4 0 1px,#e4e4e4 1px 2px)"></div>
<div class="t" style="left:12.00px;top:440.61px;height:9.61px;line-height:9.61px;font-family:'Liberation Sans', sans-serif;font-size:8.6px;color:#6d6d6d;">Default model</div>
<div class="r" style="left:139.3px;top:36px;width:2.5px;height:470px;background:repeating-linear-gradient(to bottom,#8e8e8e 0 1.4px,#cdcdcd 1.4px 2.7px)"></div>
<div class="r" style="left:687px;top:36px;width:10.5px;height:469px;background:#f0f0f0"></div>
<div class="r" style="left:688px;top:158px;width:9px;height:101px;background:#cdcdcd"></div>
<svg class="r" style="left:688.5px;top:46px" width="8" height="6" viewBox="0 0 8 6"><path d="M0.8 5 L4 1.5 L7.2 5" stroke="#555" stroke-width="1.3" fill="none"/></svg>
<svg class="r" style="left:688.5px;top:489.5px" width="8" height="6" viewBox="0 0 8 6"><path d="M0.8 1 L4 4.5 L7.2 1" stroke="#555" stroke-width="1.3" fill="none"/></svg>
<svg class="r" style="left:5px;top:4px" width="12" height="12" viewBox="0 0 12 12">
<path d="M5.85 3.5 L2 7.2 M5.85 3.5 V7.2 M5.85 3.5 L9.7 7.2" stroke="#c890c8" stroke-width="0.6" fill="none"/>
<circle cx="5.85" cy="3.25" r="1.75" fill="#8a0a8a"/>
<g fill="#700a70"><rect x="1.2" y="6.8" width="1.7" height="1.8" rx="0.8"/><rect x="5" y="6.8" width="1.7" height="1.8" rx="0.8"/><rect x="8.85" y="6.8" width="1.7" height="1.8" rx="0.8"/>
<rect x="1.2" y="9.3" width="1.7" height="1.8" rx="0.8"/><rect x="5" y="9.3" width="1.7" height="1.8" rx="0.8"/><rect x="8.85" y="9.3" width="1.7" height="1.8" rx="0.8"/></g></svg>
<div class="t" style="left:19.40px;top:6.69px;height:8.77px;line-height:8.77px;font-family:'Liberation Sans', sans-serif;font-size:7.85px;color:#1a1a1a;">Amos Output</div>
<div class="r" style="left:624px;top:10.3px;width:6.2px;height:0.85px;background:#5a5a5a"></div>
<div class="r" style="left:652px;top:7.4px;width:6.2px;height:6.2px;border:0.9px solid #444;box-sizing:border-box"></div>
<svg class="r" style="left:680px;top:7px" width="8" height="8" viewBox="0 0 8 8"><path d="M0.5 0.5 L7.5 7.5 M7.5 0.5 L0.5 7.5" stroke="#444" stroke-width="0.85"/></svg>
<div class="r" style="left:2px;top:20.5px;width:696px;height:15.1px;background:#f8f8f8"></div>
<div class="r" style="left:4.3px;top:23px;width:1.4px;height:1px;background:#a8a8a8"></div>
<div class="r" style="left:4.3px;top:25.6px;width:1.4px;height:1px;background:#a8a8a8"></div>
<div class="r" style="left:4.3px;top:28.2px;width:1.4px;height:1px;background:#a8a8a8"></div>
<div class="r" style="left:4.3px;top:30.8px;width:1.4px;height:1px;background:#a8a8a8"></div>
<svg class="r" style="left:8.5px;top:23.5px" width="12" height="10" viewBox="0 0 12 10">
<path d="M1.2 0.6 H5.8 L8 2.8 V4.2 M6 9.2 H1.2 V0.6" fill="#fff" stroke="#222" stroke-width="1.1"/>
<path d="M5.8 0.6 L8 2.8" stroke="#222" stroke-width="1.1"/>
<circle cx="6.5" cy="6.2" r="2" fill="#a8e4e4" stroke="#333" stroke-width="0.9"/>
<path d="M7.9 7.7 L10.6 9.8" stroke="#111" stroke-width="1.4"/></svg>
<svg class="r" style="left:23.5px;top:23px" width="11" height="10" viewBox="0 0 11 10">
<path d="M2.8 3.4 L4 0.7 H9.8 L8.8 3.4 Z" fill="#c8c8c8" stroke="#505050" stroke-width="0.8"/>
<path d="M5 1.6 H8.8 M4.6 2.5 H8.4" stroke="#808080" stroke-width="0.45"/>
<path d="M0.7 5.2 Q0.7 3.3 2.6 3.3 H8.6 Q10.4 3.3 10.4 5.2 V7.6 Q10.4 9.4 8.6 9.4 H2.6 Q0.7 9.4 0.7 7.6 Z" fill="#b4b4ac" stroke="#1e1e1e" stroke-width="1.1"/>
<path d="M2.4 5 V8 M3.4 5 V8 M4.4 5 V8" stroke="#8a8a86" stroke-width="0.45"/>
<rect x="5.2" y="5.8" width="2.6" height="2.2" fill="#9c9c38"/></svg>
<svg class="r" style="left:37.5px;top:23.8px" width="11" height="9" viewBox="0 0 11 9">
<path d="M0.7 1.2 Q2.8 0.3 5.2 1.2 Q7.6 0.3 9.7 1.2 V7.8 H6 L5.2 8.4 L4.4 7.8 H0.7 Z" fill="#fff" stroke="#1c1c7c" stroke-width="1.2"/>
<path d="M1.6 1.8 H4.6 V7.3 H1.6 Z" fill="#9a9aa6"/>
<path d="M5.2 1.2 V7.8" stroke="#1c1c7c" stroke-width="0.9"/></svg>
<svg class="r" style="left:51.5px;top:23.5px" width="12" height="10" viewBox="0 0 12 10">
<path d="M0.8 3.2 L1.4 2.6 H3.2 L4 3.4 H8 V8.9 H0.8 Z" fill="#7c7c1c" stroke="#2c2c0c" stroke-width="0.8"/>
<path d="M0.8 8.9 L1.8 4.2 L4.4 5.6 H10.6 L8.2 8.9 Z" fill="#a8a830" stroke="#2c2c0c" stroke-width="0.6"/>
<path d="M1.5 7.9 L2.1 4.8 L4.4 6.1 Z" fill="#f0f09c"/>
<path d="M3.6 7.2 H8.6" stroke="#d8d870" stroke-width="0.6"/>
<g fill="#4a4a4a"><circle cx="6.4" cy="1.6" r="0.6"/><circle cx="7.7" cy="1" r="0.65"/><circle cx="9.6" cy="1.9" r="0.85"/><circle cx="10.6" cy="5.9" r="0.65"/></g></svg>
<div class="r" style="left:67px;top:24px;width:1px;height:8px;background:#c8c8c8"></div>
<svg class="r" style="left:70px;top:23.6px" width="11" height="10" viewBox="0 0 11 10">
<path d="M0.6 0.6 H4 L5.4 2 V6.6 H0.6 Z" fill="#e8e8e8" stroke="#444" stroke-width="0.9"/>
<path d="M1.6 2.6 H3.4 M1.6 4.2 H3.4" stroke="#777" stroke-width="0.6"/>
<path d="M4.8 3.4 H8 L9.9 5.2 V9.3 H4.8 Z" fill="#f0f0ff" stroke="#1c1c80" stroke-width="1"/>
<path d="M6 5.6 H8.6 M6 7.2 H8.6" stroke="#6060a0" stroke-width="0.6"/></svg>
<svg class="r" style="left:85.8px;top:23.4px" width="10" height="9" viewBox="0 0 10 9">
<rect x="0.6" y="2" width="6.6" height="6.2" fill="#d8d8d8" stroke="#303030" stroke-width="1.1"/>
<path d="M1.6 4.6 L3.2 7 L9.4 0.4" stroke="#8c1818" stroke-width="1" fill="none"/></svg>
<div class="r" style="left:99px;top:24px;width:1px;height:8.5px;background:#c8c8c8"></div>
<div class="r" style="left:101.4px;top:22px;width:46.69999999999999px;height:12.8px;background:#fff"></div>
<div class="r" style="left:141.5px;top:22.7px;width:6.4px;height:11.3px;background:#ececec"></div>
<svg class="r" style="left:143.2px;top:27.4px" width="3.4" height="2" viewBox="0 0 3.4 2"><path d="M0 0 H3.4 L1.7 2 Z" fill="#111"/></svg>
<div class="t" style="left:104.40px;top:23.67px;height:10.28px;line-height:10.28px;font-family:'Liberation Sans', sans-serif;font-size:9.2px;color:#222;">3</div>
<div class="r" style="left:149.7px;top:22px;width:46.70000000000002px;height:12.8px;background:#fff"></div>
<div class="r" style="left:189.8px;top:22.7px;width:6.4px;height:11.3px;background:#ececec"></div>
<svg class="r" style="left:191.5px;top:27.4px" width="3.4" height="2" viewBox="0 0 3.4 2"><path d="M0 0 H3.4 L1.7 2 Z" fill="#111"/></svg>
<div class="t" style="left:152.70px;top:23.67px;height:10.28px;line-height:10.28px;font-family:'Liberation Sans', sans-serif;font-size:9.2px;color:#222;">7</div>
<div class="r" style="left:197.6px;top:22px;width:46.70000000000002px;height:12.8px;background:#fff"></div>
<div class="r" style="left:237.70000000000002px;top:22.7px;width:6.4px;height:11.3px;background:#ececec"></div>
<svg class="r" style="left:239.4px;top:27.4px" width="3.4" height="2" viewBox="0 0 3.4 2"><path d="M0 0 H3.4 L1.7 2 Z" fill="#111"/></svg>
<div class="t" style="left:200.60px;top:23.67px;height:10.28px;line-height:10.28px;font-family:'Liberation Sans', sans-serif;font-size:9.2px;color:#222;">0</div>
<div class="r" style="left:247px;top:24px;width:1px;height:8.5px;background:#c8c8c8"></div>
<div class="r" style="left:249px;top:21px;width:14.4px;height:13.7px;background:#cce4f7;border:1px solid #5fa3e0;box-sizing:border-box"></div>
<div class="r" style="left:263.4px;top:21px;width:14.2px;height:13.7px;background:#cce4f7;border:1px solid #5fa3e0;box-sizing:border-box"></div>
<div class="r" style="left:251px;top:25.2px;width:10px;height:1.4px;background:#777"></div>
<div class="r" style="left:254px;top:22.7px;width:1.1px;height:10px;background:#111"></div>
<div class="r" style="left:265px;top:23.1px;width:10.4px;height:9.5px;background:#c8c8c8;border:1.2px solid #222;border-radius:1.5px;box-sizing:border-box"></div>
<div class="r" style="left:279.7px;top:23.1px;width:10px;height:9.5px;background:#ff00ff;border:1px solid #400040;box-sizing:border-box"></div>
<div class="r" style="left:280.5px;top:23.9px;width:8.4px;height:2.3px;background:#a0308e"></div>
<div class="r" style="left:294px;top:23.1px;width:10px;height:9.5px;background:#ff00ff;border:1px solid #200040;box-sizing:border-box"></div>
<div class="r" style="left:294.8px;top:23.9px;width:8.4px;height:2.3px;background:#1a1a80"></div>
<div class="r" style="left:308px;top:24px;width:1px;height:8.5px;background:#c8c8c8"></div>
<svg class="r" style="left:313.5px;top:23.5px" width="8" height="10" viewBox="0 0 8 10">
<path d="M1 0.6 L4.2 0.9 L6.4 4.2 L4.9 4.3 V9.3 H2.2 V3.8 Z" fill="#f2f020" stroke="#5a5a10" stroke-width="0.55"/>
<path d="M5.2 3.6 L6.4 4.2 L5.1 4.6" fill="#333"/></svg>
<svg class="r" style="left:326px;top:23px" width="10" height="10" viewBox="0 0 10 10">
<path d="M4.4 2.2 L7.6 1.8 L9.4 3 V8.8 H5.6 L4.6 9.6" fill="#e8d8e8" stroke="#3a0a40" stroke-width="1.1" stroke-linejoin="round"/>
<path d="M1 1.2 Q2.4 0.3 4.4 2.2 V8.8 Q2.6 7.4 1 8.2 Z" fill="#f0f0f0" stroke="#3a0a40" stroke-width="1.1" stroke-linejoin="round"/>
<path d="M5.4 2.6 L7.8 2.4 V7.6 L5.4 8 Z" fill="#f8f4c8"/></svg>
<div class="r" style="left:340px;top:23px;width:1px;height:11px;background:#cfcfcf"></div>
<div class="r" style="left:0px;top:0px;width:700px;height:1.5px;background:#26455f"></div>
<div class="r" style="left:0px;top:0px;width:2px;height:508px;background:#98bcd8"></div>
<div class="r" style="left:697.5px;top:0px;width:0.6px;height:508px;background:#f4f8fb"></div>
<div class="r" style="left:698px;top:0px;width:2px;height:508px;background:#17324d"></div>
<div class="r" style="left:0px;top:505.8px;width:546px;height:2.2px;background:#9dbbd2"></div>
<div class="r" style="left:546px;top:505.8px;width:154px;height:2.2px;background:#17324d"></div>
</body></html>
